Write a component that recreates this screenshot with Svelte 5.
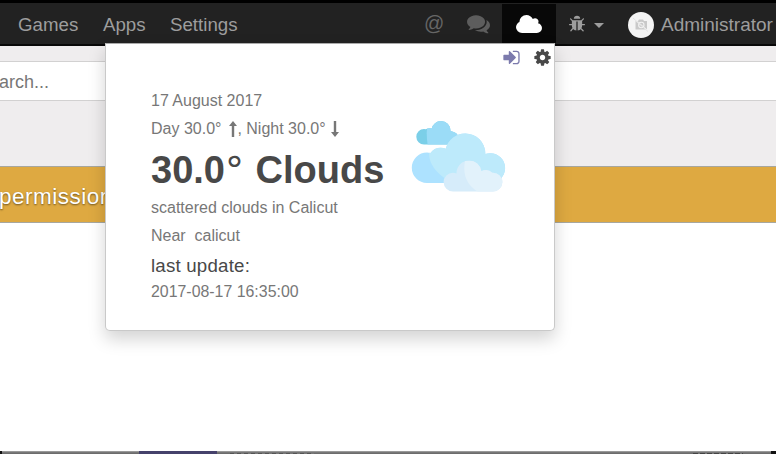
<script>
  const menu = ['Games', 'Apps', 'Settings'];
</script>

<div class="screen">
  <header>
    <nav>
      {#each menu as item, i}
        <span class="item m{i}">{item}</span>
      {/each}
    </nav>
    <div class="tray">
      <span class="at">@</span>
      <svg class="comments" viewBox="0 0 1792 1792"><path d="M1408 768q0 139-94 257t-256.500 186.500-353.500 68.500q-86 0-176-16-124 88-278 128-36 9-86 16h-3q-11 0-20.500-8t-11.500-21q-1-3-1-6.500t.5-6.500 2-6l2.500-5 3.500-5.500 4-5 4.500-5 4-4.500q5-6 23-25t26-29.500 22.500-29 25-38.500 20.500-44q-124-72-195-177t-71-224q0-139 94-257t256.500-186.500 353.500-68.500 353.500 68.500 256.500 186.500 94 257zm384 256q0 120-71 224.500t-195 176.500q10 24 20.500 44t25 38.500 22.500 29 26 29.500 23 25q1 1 4 4.500t4.500 5 4 5 3.500 5.500l2.500 5 2 6 .5 6.500-1 6.500q-3 14-13 22t-22 7q-50-7-86-16-154-40-278-128-90 16-176 16-271 0-472-132 58 4 88 4 161 0 309-45t264-129q125-92 192-212t67-254q0-77-23-152 129 71 204 178t75 230z" /></svg>
      <span class="weather">
        <svg viewBox="64 128 1920 1408" preserveAspectRatio="none"><path d="M1984 1152q0 159-112.500 271.500T1600 1536H512q-185 0-316.500-131.500T64 1088q0-132 71-241.500T322 683q-2-28-2-43 0-212 150-362t362-150q158 0 286.500 88T1306 446q70-62 166-62 106 0 181 75t75 181q0 75-41 138 129 30 213 134.500t84 239.500z" /></svg>
      </span>
      <svg class="bug" viewBox="0 0 1792 1792"><path d="M1696 960q0 26-19 45t-45 19h-224q0 171-67 290l208 209q19 19 19 45t-19 45q-18 19-45 19t-45-19l-198-197q-5 5-15 13t-42 28.500-65 36.500-82 29-97 13v-896h-128v896q-51 0-101.500-13.500t-87-33-66-39-43.500-32.500l-15-14-183 207q-20 21-48 21-24 0-43-16-19-18-20.500-44.500t15.500-46.500l202-227q-58-114-58-274h-224q-26 0-45-19t-19-45 19-45 45-19h224v-294l-173-173q-19-19-19-45t19-45 45-19 45 19l173 173h844l173-173q19-19 45-19t45 19 19 45-19 45l-173 173v294h224q26 0 45 19t19 45zm-480-576h-640q0-133 93.500-226.500t226.500-93.500 226.500 93.500 93.500 226.500z" /></svg>
      <i class="caret"></i>
      <svg class="avatar" viewBox="0 0 26 26">
        <circle cx="13" cy="13" r="13" fill="#f4f4f4" />
        <path d="M7.500 9h2.500l1-1.500h4l1 1.500H19v8.500H7.500z" fill="#c9c9c9" />
        <circle cx="13.300" cy="13" r="2.700" fill="#c9c9c9" stroke="#f1f1f1" stroke-width="1.100" />
        <path d="M5.500 6.500l15 13" stroke="#f4f4f4" stroke-width="1.200" />
        <path d="M5 6l15 13.500" stroke="#d6d6d6" stroke-width=".6" />
      </svg>
      <span class="user">Administrator</span>
    </div>
  </header>

  <div class="search"><span>arch...</span></div>
  <div class="control"></div>
  <div class="banner"><span>permission</span></div>
  <main></main>
  <footer><i class="edge"></i><i class="tab"></i><i class="link"></i><i class="follow"></i><i class="edge right"></i></footer>

  <section class="popover">
    <div class="actions">
      <svg class="signin" viewBox="0 0 1792 1792"><path d="M1312 896q0 26-19 45l-544 544q-19 19-45 19t-45-19-19-45v-288h-448q-26 0-45-19t-19-45v-384q0-26 19-45t45-19h448v-288q0-26 19-45t45-19 45 19l544 544q19 19 19 45zm352-352v704q0 119-84.500 203.500t-203.500 84.500h-320q-13 0-22.500-9.500t-9.500-22.500q0-4-1-20t-.5-26.500 3-23.500 10-19.500 20.500-6.500h320q66 0 113-47t47-113v-704q0-66-47-113t-113-47h-312l-11.500-1-11.500-3-8-5.500-7-9-2-13.500q0-4-1-20t-.5-26.500 3-23.500 10-19.500 20.500-6.500h320q119 0 203.500 84.500t84.500 203.500z" /></svg>
      <svg class="cog" viewBox="0 0 1792 1792"><path d="M1152 896q0-106-75-181t-181-75-181 75-75 181 75 181 181 75 181-75 75-181zm512-109v222q0 12-8 23t-20 13l-185 28q-19 54-39 91 35 50 107 138 10 12 10 25t-9 23q-27 37-99 108t-94 71q-12 0-26-9l-138-108q-44 23-91 38-16 136-29 186-7 28-36 28h-222q-14 0-24.500-8.500t-11.500-21.500l-28-184q-49-16-90-37l-141 107q-10 9-25 9-14 0-25-11-126-114-165-168-7-10-7-23 0-12 8-23 15-21 51-66.500t54-70.500q-27-50-41-99l-183-27q-13-2-21-12.500t-8-23.500v-222q0-12 8-23t19-13l186-28q14-46 39-92-40-57-107-138-10-12-10-24 0-10 9-23 26-36 98.500-107.500t94.500-71.500q13 0 26 10l138 107q44-23 91-38 16-136 29-186 7-28 36-28h222q14 0 24.500 8.500t11.500 21.500l28 184q49 16 90 37l142-107q9-9 24-9 13 0 25 10 129 119 165 170 7 8 7 22 0 12-8 23-15 21-51 66.500t-54 70.500q26 50 41 98l183 28q13 2 21 12.500t8 23.500z" /></svg>
    </div>
    <div class="report">
      <div class="details">
        <p>17 August 2017</p>
        <p>Day 30.0° <svg class="arrow up" viewBox="0 0 8 16"><path d="M4 0L8 5H5.200V16H2.800V5H0z" /></svg>, Night 30.0° <svg class="arrow down" viewBox="0 0 8 16"><path d="M4 16L0 11H2.800V0H5.200V11H8z" /></svg></p>
        <h1>30.0<span class="degree">°</span> Clouds</h1>
        <p>scattered clouds in Calicut</p>
        <p class="near">Near&nbsp; calicut</p>
        <h4>last update:</h4>
        <p class="stamp">2017-08-17 16:35:00</p>
      </div>
      <svg class="clouds" viewBox="0 0 96 72">
        <defs>
          <clipPath id="small">
            <circle cx="13" cy="15.800" r="7.700" />
            <circle cx="18.500" cy="14" r="6.800" />
            <circle cx="30" cy="9.500" r="9.500" />
            <path d="M13 12H30V10Q46 8 48 17V23.500H13z" />
          </clipPath>
          <clipPath id="large">
            <circle cx="16" cy="46.800" r="15.200" />
            <circle cx="29.700" cy="39.200" r="12.500" />
            <circle cx="54.300" cy="32.500" r="20" />
            <circle cx="79.200" cy="47.100" r="14.900" />
            <path d="M16 40H79V62H16z" />
          </clipPath>
          <clipPath id="front">
            <circle cx="42" cy="61.100" r="9.400" />
            <circle cx="58" cy="52" r="12.500" />
            <circle cx="75" cy="57.500" r="8.500" />
            <circle cx="82" cy="61.100" r="9.400" />
            <path d="M42 58H82V70.500H42z" />
          </clipPath>
        </defs>
        <g clip-path="url(#small)"><path fill="#7bcfe8" d="M0 0h96v72H0z" /><path fill="#9bdcf7" d="M17 0Q14 14 18 30H60V0z" /></g>
        <g clip-path="url(#large)"><path fill="#ade2ff" d="M0 0h96v72H0z" /><path fill="#bdeafb" d="M18 0V32Q18 48 38 60V66H96V0z" /></g>
        <g clip-path="url(#front)"><path fill="#d6ecfa" d="M0 0h96v72H0z" /><path fill="#e2f2fb" d="M54 40Q50 62 69 72H96V40z" /></g>
      </svg>
    </div>
  </section>
</div>

<style>
  .screen {
    position: relative;
    width: 776px;
    height: 454px;
    overflow: hidden;
    display: flex;
    flex-direction: column;
    background: #fff;
    font-family: "Liberation Sans", Arial, sans-serif;
  }
  svg { display: block; flex: none; fill: currentColor; }
  header {
    box-sizing: border-box;
    height: 46px;
    flex: none;
    display: flex;
    justify-content: space-between;
    background: #222;
    border-top: 3px solid #000;
    border-bottom: 2px solid #080808;
    color: #9d9d9d;
    font-size: 18.700px;
  }
  nav { display: flex; padding-left: 18px; line-height: 44px; }
  .item { width: 85px; white-space: nowrap; }
  .m1 { width: 67px; }
  .tray { display: flex; align-items: center; width: 352px; white-space: nowrap; line-height: 43px; }
  .at { color: #666; font-size: 20px; width: 43px; height: 43px; }
  .comments { width: 23px; height: 23px; margin-right: 1px; color: #5d5d5d; }
  .weather {
    width: 54px;
    height: 39px;
    margin: 0 12px 0 11px;
    display: flex;
    align-items: center;
    justify-content: center;
    background: #080808;
    color: #fff;
  }
  .weather svg { width: 26px; height: 18px; }
  .bug { width: 18px; height: 18px; }
  .caret { border: 5.500px solid transparent; border-top-color: #9d9d9d; border-bottom: 0; margin: 3px 23px 0 8px; }
  .avatar { width: 26px; height: 26px; margin: 2px 7px 0 1px; }
  .user { padding-top: 1px; font-size: 19px; }
  .search {
    box-sizing: border-box;
    height: 55px;
    flex: none;
    border-top: 15px solid #efedee;
    color: #777;
    font-size: 18px;
    line-height: 41px;
    text-indent: -1px;
  }
  .search span {
    box-sizing: border-box;
    display: block;
    height: 40px;
    border: solid #d2d1d1;
    border-width: 1px 0;
  }
  .control { height: 65px; flex: none; background: #efedee; }
  .banner {
    box-sizing: border-box;
    height: 57px;
    flex: none;
    border: solid #a7a79f;
    border-width: 1px 0;
    background: #dea941;
    color: #fff;
    font-size: 22.500px;
    letter-spacing: .5px;
    line-height: 59px;
    text-indent: -1px;
    text-shadow: 0 1px 2px #0008;
  }
  main { flex: 1; }
  footer { height: 3px; flex: none; display: flex; background: linear-gradient(#aaa, #777 50%, #666); }
  .edge { width: 2px; background: #111; }
  .right { width: 5px; }
  .tab { width: 78px; margin-left: 137px; background: #45416b; }
  .link { width: 84px; height: 1px; margin: 2px 0 0 13px; background: repeating-linear-gradient(90deg, #555 0 4px, #777 4px 7px); }
  .follow { width: 50px; height: 1px; margin: 2px 28px 0 auto; background: repeating-linear-gradient(90deg, #444 0 5px, #777 5px 7px); }
  .popover {
    position: absolute;
    left: 105px;
    top: 43px;
    width: 450px;
    height: 288px;
    box-sizing: border-box;
    border: 1px solid #ccc;
    border-color: #aaa #c9c9c9 #c9c9c9;
    border-radius: 0 0 5px 5px;
    background: #fff;
    box-shadow: 0 8px 17px #0000002d;
    color: #777;
  }
  .actions { display: flex; justify-content: flex-end; align-items: center; gap: 12px; height: 26px; padding-right: 2px; }
  .signin { width: 19px; height: 19px; color: #7c7bad; }
  .cog { width: 19px; height: 19px; color: #484848; }
  .report { display: flex; padding-left: 45px; }
  .details { width: 260px; padding-top: 17px; white-space: nowrap; }
  p { margin: 0; height: 28px; line-height: 28px; font-size: 16px; }
  .arrow { display: inline-block; width: 8px; height: 16px; vertical-align: -3px; }
  .up { margin: 0 .5px 0 3px; }
  .down { margin-left: 1px; }
  h1 { margin: 0; height: 51px; line-height: 54px; font-size: 38px; color: #484848; }
  .degree { margin-right: 1px; font-family: "DejaVu Sans", sans-serif; font-weight: 400; line-height: 1; }
  h4 { margin: 0; height: 28px; line-height: 32px; font-weight: 400; font-size: 18.700px; letter-spacing: .2px; color: #484848; }
  .stamp { height: 24px; line-height: 28px; font-size: 15.900px; }
  .clouds { width: 96px; height: 72px; margin-top: 51px; }
</style>
